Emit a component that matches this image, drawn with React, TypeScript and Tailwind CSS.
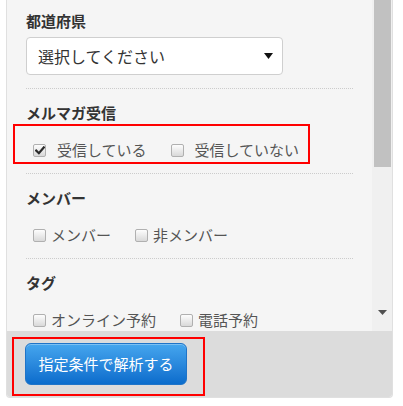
import React from 'react';

type Option = { label: string; checked?: boolean };

function Checkbox({ checked }: { checked?: boolean }) {
  return (
    <span className="relative inline-flex h-[13px] w-[13px] shrink-0 items-center justify-center rounded-[2px] border border-[#b0b0b0] bg-gradient-to-b from-[#fdfdfd] to-[#d9d9d9]">
      {checked && (
        <svg width="10" height="9" viewBox="0 0 10 9" className="text-[#2b2b2b]">
          <path d="M1.2 4.6 L3.9 7.2 L8.8 1.4" fill="none" stroke="currentColor" strokeWidth="2.2" strokeLinecap="square" />
        </svg>
      )}
    </span>
  );
}

function CheckRow({ options, wide }: { options: Option[]; wide?: boolean }) {
  return (
    <div className="mt-[15px] flex h-[24px] items-center gap-[24px] pl-[7px]">
      {options.map((o) => (
        <label key={o.label} className={`flex items-center ${wide ? 'gap-[11px]' : 'gap-[5px]'}`}>
          <Checkbox checked={o.checked} />
          <span className="text-[15px] leading-[24px] text-[#555]">{o.label}</span>
        </label>
      ))}
    </div>
  );
}

function Heading({ children }: { children: React.ReactNode }) {
  return <h3 className="text-[15px] font-bold leading-[20px] text-[#333]">{children}</h3>;
}

function Divider() {
  return <div className="border-t border-dotted border-[#cccccc]" />;
}

export default function App() {
  return (
    <div className="h-[406px] w-[403px] bg-white font-['Noto_Sans_CJK_JP','Noto_Sans',sans-serif]">
      <div className="ml-[6px] w-[387px] overflow-hidden rounded-b-[4px] border-x border-b border-[#e0e0e0]">
        {/* scrolling filter list */}
        <div className="flex h-[331px] bg-[#f5f5f5]">
          <div className="flex-1 overflow-hidden px-[19px]">
            <div className="pt-[11px]">
              <Heading>都道府県</Heading>
              <div className="mb-[13px] mt-[6px] flex h-[38px] w-[257px] items-center justify-between rounded-[4px] border border-[#cfcfcf] bg-white pl-[11px] pr-[9px]">
                <span className="text-[16px] leading-[24px] text-[#333]">選択してください</span>
                <svg width="9" height="6" viewBox="0 0 9 6">
                  <path d="M0 0 H9 L4.5 6 Z" fill="#111" />
                </svg>
              </div>
            </div>
            <Divider />

            <div className="pt-[14px]">
              <Heading>メルマガ受信</Heading>
              <div className="relative flow-root">
                <CheckRow wide options={[{ label: '受信している', checked: true }, { label: '受信していない' }]} />
                <div className="pointer-events-none absolute left-[-13px] top-[1px] h-[40px] w-[297px] border-2 border-[#ff0000]" />
              </div>
              <div className="h-[11px]" />
            </div>
            <Divider />

            <div className="pt-[14px]">
              <Heading>メンバー</Heading>
              <CheckRow options={[{ label: 'メンバー' }, { label: '非メンバー' }]} />
              <div className="h-[11px]" />
            </div>
            <Divider />

            <div className="pt-[14px]">
              <Heading>タグ</Heading>
              <CheckRow options={[{ label: 'オンライン予約' }, { label: '電話予約' }]} />
            </div>
          </div>

          {/* scrollbar */}
          <div className="flex w-[20px] flex-col bg-[#f0f0f0] pl-[2px] pr-[1px]">
            <div className="h-[167px] bg-[#c1c1c1]" />
            <div className="flex-1" />
            <div className="flex h-[26px] items-start justify-center pt-[5px]">
              <svg width="9" height="5" viewBox="0 0 9 5">
                <path d="M0 0 H9 L4.5 5 Z" fill="#505050" />
              </svg>
            </div>
          </div>
        </div>

        {/* footer */}
        <div className="h-[66px] bg-[#dcdcdc] pl-[5px] pt-[6px]">
          <div className="h-[59px] w-[193px] border-2 border-[#ff0000] pl-[11px] pt-[4px]">
            <button className="h-[42px] w-[162px] rounded-[6px] border border-[#1f74c8] bg-gradient-to-b from-[#45a6ee] to-[#0a6ccc] text-[15px] leading-[20px] text-white shadow-[inset_0_1px_0_rgba(255,255,255,0.3)]">
              指定条件で解析する
            </button>
          </div>
        </div>
      </div>
    </div>
  );
}
